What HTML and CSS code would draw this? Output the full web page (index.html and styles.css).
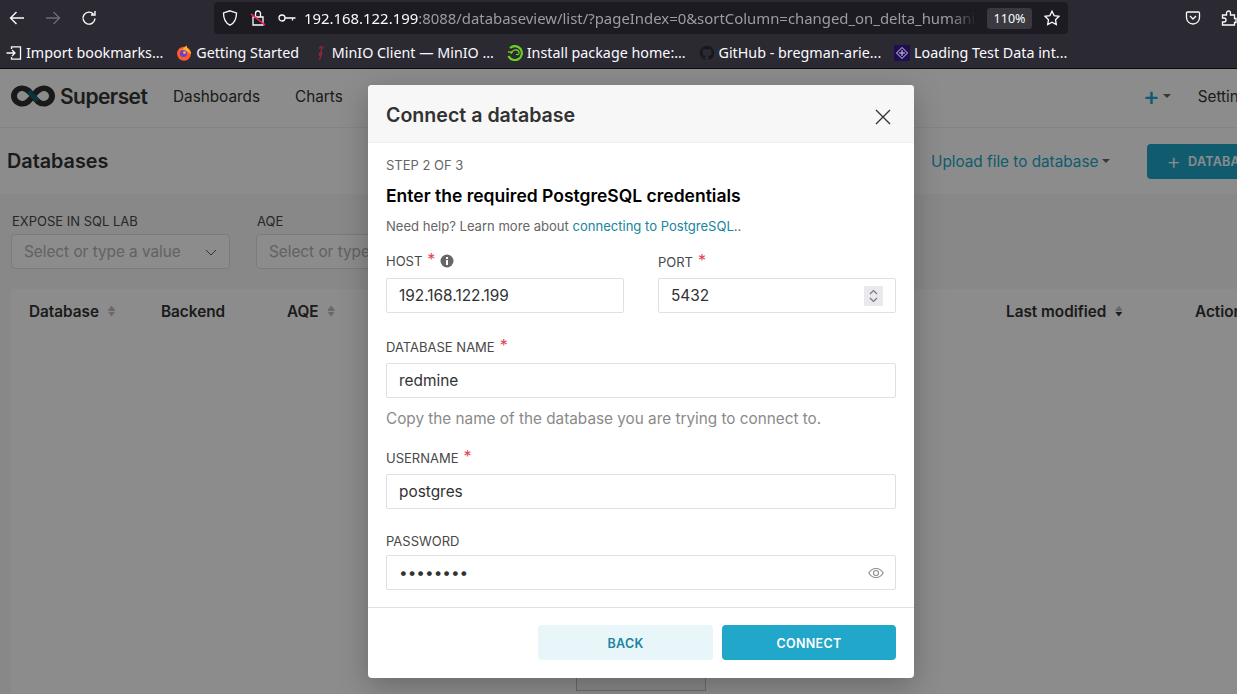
FILE: index.html
```html
<!DOCTYPE html>
<html lang="en">
<head>
    <meta charset="UTF-8">
    <title>Superset - Connect a database</title>
    <link rel="stylesheet" href="styles.css">
</head>
<body>
    <div id="toolbar">
        <div class="navBtns">
            <svg class="navIcon" viewBox="0 0 16 16"><path d="M15 8H1.500M7.500 2 1.500 8l6 6" stroke="#fbfbfe"/></svg>
            <svg class="navIcon" viewBox="0 0 16 16"><path d="M1 8h13.500M8.500 2l6 6-6 6" stroke="#6d6c75"/></svg>
            <svg class="navIcon" viewBox="0 0 16 16"><path d="M14 8.500A6 6 0 1 1 12.400 4M14 1v4h-4" stroke="#fbfbfe"/></svg>
        </div>
        <div id="urlbar">
            <svg class="urlIcon" viewBox="0 0 16 16"><path d="M8 .8 14.500 3c0 6.500-1.800 10-6.500 12.200C3.300 13 1.500 9.500 1.500 3z" stroke="#fbfbfe"/></svg>
            <svg class="urlIcon" viewBox="0 0 16 16"><path d="M3 7h10v8H3zM5.500 7V3.500a2.500 2.500 0 0 1 5 0V7" stroke="#fbfbfe"/><path d="M1 4l14 11" stroke="#e22850" stroke-width="1.600"/></svg>
            <svg class="urlIcon keyIcon" viewBox="0 0 18 16"><circle cx="4" cy="8" r="3" stroke="#fbfbfe"/><path d="M7 8h10.500M14.500 8v2.500" stroke="#fbfbfe"/></svg>
            <div class="url"><span class="urlHost">192.168.122.199</span>:8088/databaseview/list/?pageIndex=0&amp;sortColumn=changed_on_delta_humani</div>
            <span class="zoomBadge">110%</span>
            <svg class="urlIcon star" viewBox="0 0 16 16"><path d="M8 1.200l2.100 4.400 4.900.7-3.500 3.400.8 4.900L8 12.300l-4.300 2.300.8-4.900L1 6.300l4.900-.7z" stroke="#fbfbfe"/></svg>
        </div>
        <div class="toolRight">
            <svg class="urlIcon" viewBox="0 0 16 16"><path d="M2.500 2h11a1 1 0 0 1 1 1v4.500a6.500 6.500 0 0 1-13 0V3a1 1 0 0 1 1-1zM5 6l3 3 3-3" stroke="#fbfbfe"/></svg>
            <svg class="urlIcon" viewBox="0 0 16 16"><path d="M1.500 5H5.500V3a2 2 0 0 1 4 0v2h4v3.500h1.500v4h-1.500V15H1.500v-3H3a2 2 0 0 0 0-4H1.500z" stroke="#fbfbfe"/></svg>
        </div>
    </div>

    <div id="bookmarks">
        <div class="mark">
            <svg class="markIcon" viewBox="0 0 16 16"><path d="M5.500 4V1.800h9v12.400h-9V12M.5 8h8.500M6 5l3 3-3 3" fill="none" stroke="#fbfbfe" stroke-width="1.300"/></svg>
            <span>Import bookmarks...</span>
        </div>
        <div class="mark">
            <svg class="markIcon" viewBox="0 0 16 16"><circle cx="8" cy="8.800" r="7" fill="#ff5a2b"/><path d="M3 3.500c1 1 2 1.200 3.500 1.500C7.500 3 9 1.500 11 .5c-.5 1.500 0 2.500 2 4 1.500 1.500 2 3 2 4.500L10 6z" fill="#ffb52e"/><circle cx="7.500" cy="8.500" r="3.600" fill="#6a3fd6"/><circle cx="8.500" cy="7.500" r="1.500" fill="#ffa436"/></svg>
            <span>Getting Started</span>
        </div>
        <div class="mark">
            <svg class="markIcon" viewBox="0 0 16 16"><path d="M7 3.500 9 1.500l2 1-1.500 1L9 7 7 9l1.500 2.500-1 3.500M9 7c1 1 1 2 0 3L7 9" fill="none" stroke="#a3243b" stroke-width="1.100"/></svg>
            <span>MinIO Client — MinIO ...</span>
        </div>
        <div class="mark">
            <svg class="markIcon" viewBox="0 0 16 16"><path d="M3 3a7 7 0 1 1-1.500 8" fill="none" stroke="#6cd11e" stroke-width="2.200"/><path d="M4 9c.5-3 3-4.500 5.500-4 2 .5 3 2 2.500 3.500-.5 1.200-2 1.500-3 .8" fill="none" stroke="#6cd11e" stroke-width="1.300"/><path d="M1 7h5" stroke="#6cd11e" stroke-width="1.400"/></svg>
            <span>Install package home:...</span>
        </div>
        <div class="mark">
            <svg class="markIcon" viewBox="0 0 16 16"><path d="M8 .800a7.200 7.200 0 0 0-2.300 14c.4.100.5-.2.500-.4v-1.300c-2 .4-2.400-1-2.400-1-.3-.8-.8-1-.8-1-.7-.5 0-.5 0-.5.700 0 1.100.8 1.100.8.600 1.100 1.700.8 2.100.6.100-.5.300-.8.500-1-1.600-.2-3.300-.8-3.300-3.500 0-.8.300-1.400.7-1.900 0-.2-.3-.9.100-1.900 0 0 .6-.2 2 .7a7 7 0 0 1 3.600 0c1.400-.9 2-.7 2-.7.400 1 .1 1.700.1 1.900.5.500.7 1.100.7 1.900 0 2.700-1.700 3.300-3.300 3.500.3.200.5.700.5 1.300v2c0 .2.100.5.500.4A7.200 7.200 0 0 0 8 .800z" fill="#17161c"/></svg>
            <span>GitHub - bregman-arie...</span>
        </div>
        <div class="mark">
            <svg class="markIcon" viewBox="0 0 16 16"><rect width="16" height="16" fill="#1f0f52"/><path d="M8 2.500 13.500 8 8 13.500 2.500 8zM8 5v6M5 8h6" fill="none" stroke="#d9cdf5"/></svg>
            <span>Loading Test Data int...</span>
        </div>
    </div>

    <div id="app">
        <header id="topNav">
            <svg class="logo" viewBox="1.400 0 41.200 22" preserveAspectRatio="none"><path d="M22 11c-3.500-5-6-7.800-10-7.800a7.800 7.800 0 0 0 0 15.600c4 0 6.500-2.800 10-7.800s6-7.800 10-7.800a7.800 7.800 0 0 1 0 15.600c-4 0-6.500-2.800-10-7.800z" fill="none" stroke="#2f2f2f" stroke-width="5.600"/><path d="M19.800 4.800 24 10.500l-3 3.500-4.800-6.200z" fill="#135f72"/><path d="M24.200 17.200 20 11.500l3-3.500 4.800 6.200z" fill="#135f72"/></svg>
            <span class="brand">Superset</span>
            <nav class="navLinks">
                <span>Dashboards</span>
                <span>Charts</span>
            </nav>
            <div class="navRight">
                <span class="plus">+</span><i class="caret smallCaret"></i>
                <span class="settings">Settings</span>
            </div>
        </header>

        <div id="titleBar">
            <h1>Databases</h1>
            <div class="titleActions">
                <span class="uploadLink">Upload file to database</span><i class="caret"></i>
                <div class="addBtn"><span class="addPlus">+</span>DATABASE</div>
            </div>
        </div>

        <main id="content">
            <div class="filters">
                <div class="filter">
                    <label>EXPOSE IN SQL LAB</label>
                    <div class="selectBox">Select or type a value
                        <svg class="chev" viewBox="0 0 12 12"><path d="M1 4l5 5 5-5" fill="none" stroke="#5c5c5c"/></svg>
                    </div>
                </div>
                <div class="filter">
                    <label>AQE</label>
                    <div class="selectBox">Select or type a value</div>
                </div>
            </div>
            <div class="tablePanel">
                <div class="tableHead">
                    <span class="th thDb">Database<i class="sorter"></i></span>
                    <span class="th thBackend">Backend</span>
                    <span class="th thAqe">AQE<i class="sorter"></i></span>
                    <span class="th thModified">Last modified<i class="sorter sorterDown"></i></span>
                    <span class="th thActions">Actions</span>
                </div>
                <div class="pageBox"></div>
            </div>
        </main>
    </div>

    <div id="overlay"></div>

    <section id="modal">
        <div class="modalHead">
            <h2>Connect a database</h2>
            <svg class="closeIcon" viewBox="0 0 16 16"><path d="M1 1l14 14M15 1 1 15" stroke="#333" stroke-width="1.400"/></svg>
        </div>
        <div class="modalBody">
            <p class="step">STEP 2 OF 3</p>
            <h3>Enter the required PostgreSQL credentials</h3>
            <p class="help">Need help? Learn more about <a>connecting to PostgreSQL.</a>.</p>

            <div class="row">
                <div class="field hostField">
                    <label><span>HOST</span><b>*</b>
                        <svg class="infoIcon" viewBox="0 0 14 14"><circle cx="7" cy="7" r="6.500" fill="#666"/><rect x="6" y="6" width="2" height="5" fill="#fff"/><rect x="6" y="3" width="2" height="2" fill="#fff"/></svg>
                    </label>
                    <input class="textInput" type="text" value="192.168.122.199">
                </div>
                <div class="field portField">
                    <label><span>PORT</span><b>*</b></label>
                    <div class="inputWrap">
                        <input class="textInput" type="text" value="5432">
                        <div class="spinner">
                            <svg viewBox="0 0 10 16"><path d="M1.500 6 5 2.500 8.500 6M1.500 10 5 13.500 8.500 10" fill="none" stroke="#77767e" stroke-width="1.200"/></svg>
                        </div>
                    </div>
                </div>
            </div>

            <div class="field dbField">
                <label><span>DATABASE NAME</span><b>*</b></label>
                <input class="textInput" type="text" value="redmine">
                <p class="hint">Copy the name of the database you are trying to connect to.</p>
            </div>

            <div class="field userField">
                <label><span>USERNAME</span><b>*</b></label>
                <input class="textInput" type="text" value="postgres">
            </div>

            <div class="field passField">
                <label>PASSWORD</label>
                <div class="inputWrap">
                    <input class="textInput" type="password" value="postgres">
                    <svg class="eyeIcon" viewBox="0 0 16 16"><path d="M.8 8C2.500 5 5 3.500 8 3.500S13.500 5 15.200 8C13.500 11 11 12.500 8 12.500S2.500 11 .8 8z" fill="none" stroke="#8c8c8c" stroke-width="1.100"/><circle cx="8" cy="8" r="2.500" fill="none" stroke="#8c8c8c" stroke-width="1.100"/></svg>
                </div>
            </div>
        </div>
        <div class="modalFoot">
            <button class="btn btnBack">BACK</button>
            <button class="btn btnConnect">CONNECT</button>
        </div>
    </section>
</body>
</html>
```

FILE: styles.css
```css
* {margin: 0; padding: 0; box-sizing: border-box;}
html, body {height: 694px; overflow: hidden;}
body {font-family: Inter, "Liberation Sans", sans-serif; background: #fff; position: relative;}
svg {display: block; flex: none;}

/* browser chrome */
#toolbar {height: 35px; background: #2b2a33; display: flex; align-items: center;}
.navBtns {display: flex; gap: 20px; padding-left: 9px; width: 214px; flex: none;}
.navIcon {width: 16px; height: 16px; fill: none; stroke-width: 1.400;}
#urlbar {width: 854px; height: 32px; margin-top: 1px; background: #1c1b22; border-radius: 4px; display: flex; align-items: center; padding-left: 8px; color: #fbfbfe; flex: none;}
.urlIcon {width: 16px; height: 16px; fill: none; stroke-width: 1.300; margin-right: 12px;}
.keyIcon {width: 18px; margin-right: 8px;}
.url {font: 14.900px "Noto Sans", sans-serif; color: #9d9ca3; white-space: nowrap; width: 673px; overflow: hidden; mask-image: linear-gradient(to right, #000 96%, transparent);}
.urlHost {color: #fbfbfe;}
.zoomBadge {font: 12.500px "Noto Sans", sans-serif; background: #3a3940; border-radius: 3px; width: 45px; height: 21px; line-height: 21px; text-align: center; margin-left: 10px;}
.star {margin-left: 12px; margin-right: 0;}
.toolRight {display: flex; margin-left: 117px; gap: 8px;}

#bookmarks {height: 34px; background: #2b2a33; border-bottom: 1px solid #0c0c0d; display: flex; align-items: center; padding: 2px 0 0 6px; gap: 12.800px; color: #fbfbfe; font: 14.300px "Noto Sans", sans-serif; white-space: nowrap;}
.mark {display: flex; align-items: center; gap: 4px;}
.markIcon {width: 16px; height: 16px;}

/* superset page */
#app {height: 625px; overflow: hidden;}
#topNav {height: 59px; border-bottom: 1px solid #f0f0f0; display: flex; align-items: center; padding: 0 0 4px 11px; color: #484848;}
.logo {width: 44px; height: 22px;}
.brand {font-size: 21px; font-weight: 600; margin-left: 5px; letter-spacing: -.55px; color: #333; width: 113px;}
.navLinks {display: flex; gap: 35px; font-size: 15.300px; color: #323232;}
.navRight {margin-left: auto; display: flex; align-items: center; white-space: nowrap; width: 94px; overflow: hidden;}
.plus {color: #20a7c9; font-size: 25px; font-weight: 500; line-height: 1;}
.settings {font-size: 15.300px; color: #323232; margin-left: 27px;}
.caret {display: inline-block; border: 4px solid transparent; border-top-color: #666; border-bottom: 0; margin-left: 4px;}
.smallCaret {margin-left: 3px;}

#titleBar {height: 66px; display: flex; align-items: center; padding-left: 7px;}
h1 {font-size: 19.800px; font-weight: 600; color: #323232;}
.titleActions {margin-left: auto; display: flex; align-items: center; white-space: nowrap; width: 306px; overflow: hidden;}
.uploadLink {font-size: 15.300px; color: #20a7c9;}
.addBtn {background: #20a7c9; color: #fff; border-radius: 4px; height: 35px; width: 140px; margin-left: 37px; flex: none; display: flex; align-items: center; padding-left: 19px; font-size: 12.500px; font-weight: 600; letter-spacing: .3px;}
.addPlus {font-size: 22px; font-weight: 300; margin-right: 7px;}

#content {background: #f7f7f7; height: 500px; padding-top: 19px;}
.filters {display: flex; gap: 26px; padding-left: 11px; height: 76px;}
.filter label {display: block; font-size: 13px; color: #484848; line-height: 16px; margin-bottom: 5px; padding-left: 1px;}
.selectBox {width: 219px; height: 35px; border: 1px solid #e0e0e0; border-radius: 4px; padding: 0 12px; font-size: 15.300px; color: #b2b2b2; background: #fff; display: flex; align-items: center; justify-content: space-between; white-space: nowrap; overflow: hidden;}
.chev {width: 12px; height: 12px;}
.tablePanel {background: #fff; margin-left: 11px; height: 405px; position: relative;}
.tableHead {height: 44px; display: flex; align-items: center; font-size: 15.300px; font-weight: 600; color: #323232; white-space: nowrap;}
.th {display: flex; align-items: center; flex: none;}
.thDb {margin-left: 18px; width: 132px;}
.thBackend {width: 126px;}
.thAqe {width: 719px;}
.thModified {width: 189px;}
.sorter {width: 7px; height: 11px; margin-left: 9px; background: linear-gradient(#bfbfbf 0 45%, transparent 45% 55%, #bfbfbf 55%); clip-path: polygon(50% 0, 100% 40%, 100% 60%, 50% 100%, 0 60%, 0 40%);}
.sorterDown {background: linear-gradient(#bfbfbf 0 45%, transparent 45% 55%, #323232 55%);}
.pageBox {position: absolute; left: 565px; top: 362px; width: 130px; height: 40px; border: 1px solid #c4c4c4; background: #f7f7f7;}

#overlay {position: absolute; inset: 69px 0 0 0; background: rgba(0, 0, 0, .45);}

/* modal */
#modal {position: absolute; left: 368px; top: 85px; width: 546px; height: 593px; background: #fff; border-radius: 4px; box-shadow: 0 8px 30px rgba(0, 0, 0, .25); display: flex; flex-direction: column;}
.modalHead {height: 58px; background: #f7f7f7; border-bottom: 1px solid #f0f0f0; border-radius: 4px 4px 0 0; display: flex; align-items: center; justify-content: space-between; padding: 0 23px 0 18px;}
h2 {font-size: 19.600px; font-weight: 600; color: #323232; margin-top: 3px;}
.closeIcon {width: 16px; height: 16px; margin-top: 6px;}
.modalBody {flex: 1; padding: 14px 18px 0; color: #323232;}
.step {font-size: 13px; line-height: 16px; color: #666;}
h3 {font-size: 17.500px; font-weight: 600; color: #000; line-height: 20px; margin-top: 13px;}
.help {font-size: 13.050px; line-height: 16px; color: #666; margin-top: 12px;}
.help a {color: #1985a0;}
.row {display: flex; justify-content: space-between; margin-top: 18px;}
.hostField {width: 238px;}
.portField {width: 238px;}
.field label {display: flex; align-items: center; height: 17px; font-size: 13px; color: #484848; white-space: pre;}
.field b {color: #e04355; font-weight: 400; font-size: 16px; margin-left: 5px; position: relative; top: -2px;}
.infoIcon {width: 14px; height: 14px; margin-left: 5px;}
.portField label {margin-top: 1px; margin-bottom: -1px;}
.textInput {display: block; width: 100%; height: 35px; margin-top: 8px; border: 1px solid #e0e0e0; border-radius: 2px; padding: 0 12px; font: 15.400px Inter, sans-serif; color: #323232; outline: none; background: #fff;}
.row .textInput {margin-top: 9px;}
.inputWrap {position: relative;}
.spinner {position: absolute; right: 13px; top: 7px; width: 19px; height: 20px; background: #e8e8ed; padding: 2px 4px;}
.row .spinner {top: 8px;}
.spinner svg {width: 11px; height: 16px;}
.dbField {margin-top: 25px;}
.hint {font-size: 15.300px; line-height: 20px; color: #8a8a8a; margin-top: 11px;}
.userField {margin-top: 20px;}
.passField {margin-top: 23px;}
.passField .textInput {margin-top: 6px;}
.eyeIcon {position: absolute; right: 12px; top: 10px; width: 16px; height: 16px;}
.modalFoot {height: 71px; border-top: 1px solid #e0e0e0; display: flex; justify-content: flex-end; gap: 9px; padding: 17px 18px 0;}
.btn {width: 175px; height: 35px; border: 0; border-radius: 4px; font: 600 12.500px Inter, sans-serif; letter-spacing: .3px; padding-top: 2px;}
.btnBack {background: #e8f5f9; color: #1985a0;}
.btnConnect {width: 174px; background: #20a7c9; color: #fff;}
```
